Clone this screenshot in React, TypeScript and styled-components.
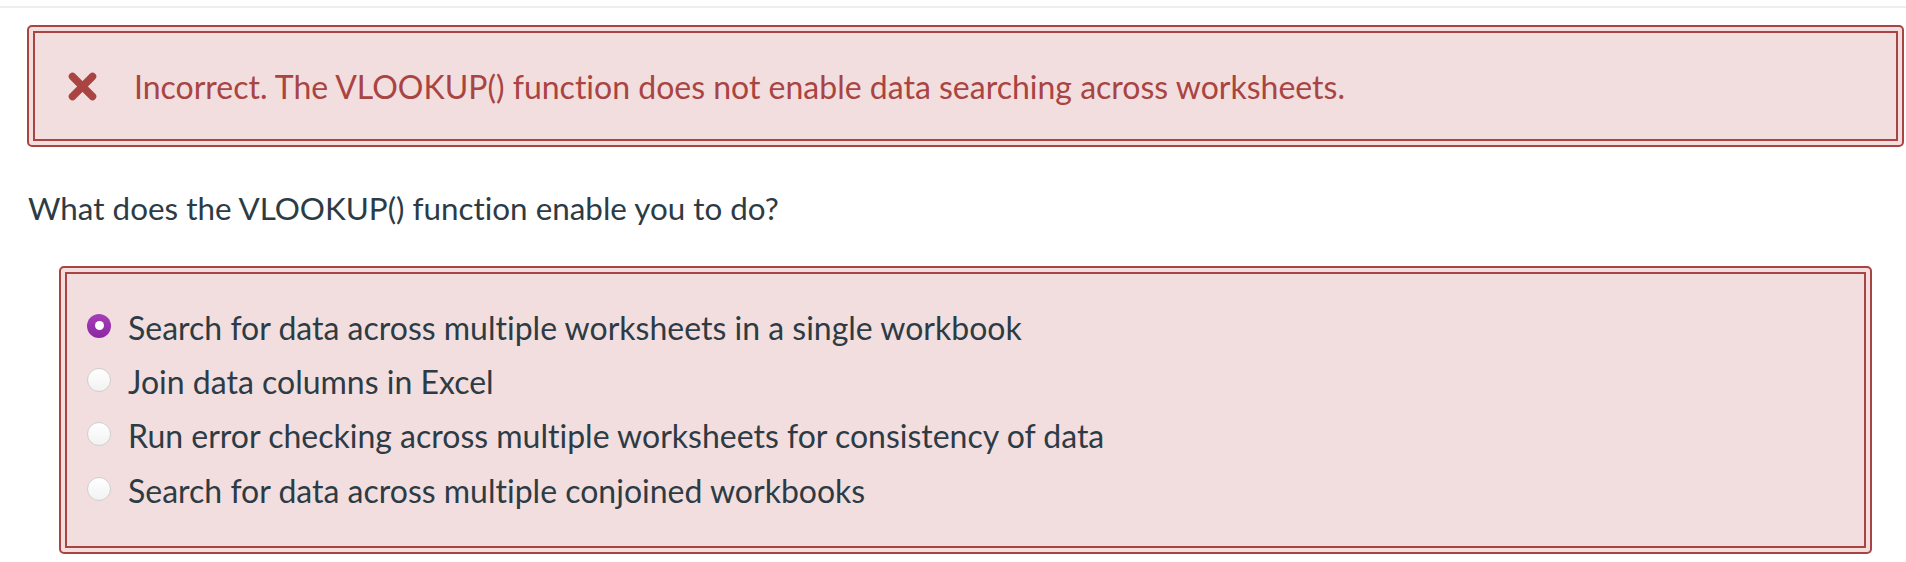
import React from "react";
import styled, { createGlobalStyle } from "styled-components";

const GlobalStyle = createGlobalStyle`
  html, body {
    margin: 0;
    padding: 0;
    background: #fff;
    font-family: Lato, "Open Sans", Arial, sans-serif;
    font-variant-ligatures: none;
  }
`;

const Page = styled.div`
  padding-top: 6px;
`;

const TopRule = styled.div`
  height: 2px;
  background: #eeeeee;
`;

// double red frame, bootstrap-ish error colours
const Frame = styled.div<{ $left: number; $right: number }>`
  margin: 0 ${(p) => p.$right}px 0 ${(p) => p.$left}px;
  border: 2px solid #a94442;
  border-radius: 5px;
  padding: 4px;
  background: #f2dede;
`;

const FrameInner = styled.div`
  border: 2px solid #a94442;
  background: #f2dede;
`;

const AlertWrap = styled.div`
  margin-top: 17px;
`;

const AlertBody = styled.div`
  height: 106px;
  display: flex;
  align-items: center;
  padding-left: 33px;
  color: #a94442;
  font-size: 32px;
`;

const AlertIcon = styled.svg`
  width: 29px;
  height: 29px;
  flex: none;
  margin-right: 37px;
`;

const Question = styled.p`
  margin: 0;
  padding: 45px 0 0 28px;
  height: 74px;
  color: #2d3b45;
  font-size: 31.4px;
  line-height: 32px;
`;

const Options = styled.div`
  padding: 26px 0 28px 20px;
  display: flex;
  flex-direction: column;
`;

const Option = styled.label`
  display: flex;
  align-items: center;
  height: 54.4px;
  color: #2d3b45;
  font-size: 32px;
`;

const Radio = styled.span<{ $checked: boolean }>`
  width: 24px;
  height: 24px;
  border-radius: 50%;
  box-sizing: border-box;
  flex: none;
  margin-right: 17px;
  margin-top: -3px;
  position: relative;
  background: ${(p) =>
    p.$checked
      ? "linear-gradient(#a640b8, #8d26a3)"
      : "linear-gradient(#ffffff, #f2f2f2)"};
  border: ${(p) => (p.$checked ? "none" : "1px solid #cfcfcf")};

  &::after {
    content: "";
    display: ${(p) => (p.$checked ? "block" : "none")};
    position: absolute;
    left: 50%;
    top: 50%;
    width: 9px;
    height: 9px;
    margin: -4.5px 0 0 -4.5px;
    border-radius: 50%;
    background: #fff;
  }
`;

const answers = [
  "Search for data across multiple worksheets in a single workbook",
  "Join data columns in Excel",
  "Run error checking across multiple worksheets for consistency of data",
  "Search for data across multiple conjoined workbooks",
];

export default function App() {
  return (
    <Page>
      <GlobalStyle />
      <TopRule />
      <AlertWrap>
        <Frame $left={27} $right={2}>
          <FrameInner>
            <AlertBody>
              <AlertIcon viewBox="0 0 29 29">
                <path
                  d="M4.5 4.5 L24.5 24.5 M24.5 4.5 L4.5 24.5"
                  stroke="#a94442"
                  strokeWidth="7.5"
                  strokeLinecap="round"
                />
              </AlertIcon>
              Incorrect. The VLOOKUP() function does not enable data searching across worksheets.
            </AlertBody>
          </FrameInner>
        </Frame>
      </AlertWrap>
      <Question>What does the VLOOKUP() function enable you to do?</Question>
      <Frame $left={59} $right={34}>
        <FrameInner>
          <Options>
            {answers.map((a, i) => (
              <Option key={a}>
                <Radio $checked={i === 0} />
                {a}
              </Option>
            ))}
          </Options>
        </FrameInner>
      </Frame>
    </Page>
  );
}
